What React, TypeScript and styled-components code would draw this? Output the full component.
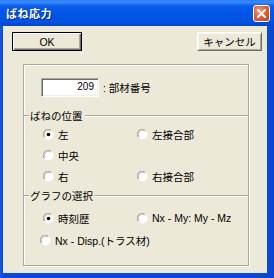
import React from 'react'
import styled, { createGlobalStyle } from 'styled-components'

const GlobalStyle = createGlobalStyle`
  html, body {
    margin: 0;
    padding: 0;
    background: #ffffff;
  }
  body {
    font-family: "Liberation Sans", "Noto Sans CJK JP", sans-serif;
    font-size: 10.5px;
    color: #000000;
  }
`

const Window = styled.div`
  width: 274px;
  height: 278px;
  box-sizing: border-box;
  display: flex;
  flex-direction: column;
  background: linear-gradient(to right, #1a5ae6 0px, #0a48d6 3px, #0a48d6 267px, #0b45cc 274px);
`

const TitleBar = styled.div`
  height: 26px;
  flex-shrink: 0;
  display: flex;
  align-items: center;
  justify-content: space-between;
  padding: 0 4px 0 6px;
  box-sizing: border-box;
  background: linear-gradient(
    to bottom,
    #2f7cf5 0px,
    #3b8bff 2px,
    #0a5ded 6px,
    #0055e6 14px,
    #0052e0 22px,
    #0048d2 26px
  );
`

const Title = styled.span`
  color: #ffffff;
  font-family: "Noto Sans CJK JP", sans-serif;
  font-weight: bold;
  font-size: 11px;
  letter-spacing: 0.5px;
  text-shadow: 1px 1px 0 #0a2a90;
`

const CloseButton = styled.div`
  width: 17px;
  height: 17px;
  box-sizing: border-box;
  border: 1px solid #ffffff;
  border-radius: 3px;
  background: radial-gradient(circle at 35% 30%, #f09a7a 0%, #e2603e 45%, #c8401f 100%);
  display: flex;
  align-items: center;
  justify-content: center;
  margin-top: 1px;
`

const Body = styled.div`
  flex: 1;
  margin: 0 7px 5px 3px;
  background: #ece9d8;
  padding: 6px 5px 7px 9px;
  display: flex;
  flex-direction: column;
`

const ButtonRow = styled.div`
  display: flex;
  justify-content: space-between;
  align-items: flex-start;
`

const Button = styled.div<{ $width: number; $default?: boolean }>`
  width: ${({ $width }) => $width}px;
  height: 19px;
  box-sizing: border-box;
  display: flex;
  align-items: center;
  justify-content: center;
  background: #ece9d8;
  font-size: 10.5px;
  border: 1px solid #000000;
  box-shadow: inset 1px 1px 0 #ffffff, inset -1px -1px 0 #716f64, inset -2px -2px 0 #aca899;
  ${({ $default }) =>
    !$default &&
    'border-color: #ffffff #716f64 #716f64 #ffffff; box-shadow: inset 1px 1px 0 #f5f4ee, inset -1px -1px 0 #aca899;'}
`

const OuterGroup = styled.div`
  flex: 1;
  margin: 13px 13px 0 11px;
  border: 1px solid #aca899;
  box-shadow: inset 1px 1px 0 #ffffff, 1px 1px 0 #ffffff;
  display: flex;
  flex-direction: column;
  padding-top: 13px;
`

const FieldRow = styled.div`
  display: flex;
  align-items: center;
  margin-left: 17px;
  height: 19px;
`

const NumberBox = styled.div`
  width: 58px;
  height: 19px;
  box-sizing: border-box;
  background: #ffffff;
  border-top: 1px solid #aca899;
  border-left: 1px solid #aca899;
  border-right: 1px solid #ffffff;
  border-bottom: 1px solid #ffffff;
  box-shadow: inset 1px 1px 0 #716f64, inset -1px -1px 0 #f1efe2;
  text-align: right;
  padding-right: 4px;
  line-height: 15px;
  font-size: 10px;
`

const FieldLabel = styled.span`
  margin-left: 4px;
`

const GroupHeader = styled.div<{ $top: number }>`
  display: flex;
  align-items: center;
  height: 12px;
  margin-top: ${({ $top }) => $top}px;

  &::before,
  &::after {
    content: '';
    height: 0;
    border-top: 1px solid #aca899;
    border-bottom: 1px solid #ffffff;
  }
  &::before {
    width: 5px;
  }
  &::after {
    flex: 1;
  }
`

const GroupLabel = styled.span`
  padding: 0 2px 0 1px;
  line-height: 12px;
`

const RadioGrid = styled.div<{ $top: number; $rows: string }>`
  display: grid;
  grid-template-columns: 94px 1fr;
  grid-template-rows: ${({ $rows }) => $rows};
  padding: ${({ $top }) => $top}px 0 0 19px;
`

const RadioItem = styled.label<{ $shift?: number }>`
  display: flex;
  align-items: center;
  gap: 4px;
  white-space: nowrap;
  margin-left: ${({ $shift }) => $shift ?? 0}px;
`

const RadioMark = ({ checked }: { checked?: boolean }) => (
  <svg width="11" height="11" viewBox="0 0 11 11">
    <circle cx="5.5" cy="5.5" r="5" fill="#ffffff" />
    <path d="M1.2 8.2 A5 5 0 0 1 8.2 1.2" fill="none" stroke="#9c9a8e" strokeWidth="1" />
    <path d="M2.2 7.8 A4 4 0 0 1 7.8 2.2" fill="none" stroke="#b5b3a8" strokeWidth="0.8" />
    {checked && <circle cx="5.5" cy="5.5" r="1.8" fill="#000000" />}
  </svg>
)

const Radio = ({
  label,
  checked,
  shift,
  style,
}: {
  label: string
  checked?: boolean
  shift?: number
  style?: React.CSSProperties
}) => (
  <RadioItem $shift={shift} style={style}>
    <RadioMark checked={checked} />
    <span>{label}</span>
  </RadioItem>
)

const CloseIcon = () => (
  <svg width="9" height="9" viewBox="0 0 9 9">
    <path d="M1 1 L8 8 M8 1 L1 8" stroke="#ffffff" strokeWidth="2" strokeLinecap="square" />
  </svg>
)

const App = () => {
  return (
    <>
      <GlobalStyle />
      <Window>
        <TitleBar>
          <Title>ばね応力</Title>
          <CloseButton>
            <CloseIcon />
          </CloseButton>
        </TitleBar>
        <Body>
          <ButtonRow>
            <Button $width={70} $default>
              OK
            </Button>
            <Button $width={65}>キャンセル</Button>
          </ButtonRow>
          <OuterGroup>
            <FieldRow>
              <NumberBox>209</NumberBox>
              <FieldLabel>: 部材番号</FieldLabel>
            </FieldRow>

            <GroupHeader $top={13}>
              <GroupLabel>ばねの位置</GroupLabel>
            </GroupHeader>
            <RadioGrid $top={2} $rows="21px 21px 21px">
              <Radio label="左" checked style={{ gridColumn: 1, gridRow: 1 }} />
              <Radio label="左接合部" style={{ gridColumn: 2, gridRow: 1 }} />
              <Radio label="中央" style={{ gridColumn: 1, gridRow: 2 }} />
              <Radio label="右" style={{ gridColumn: 1, gridRow: 3 }} />
              <Radio label="右接合部" style={{ gridColumn: 2, gridRow: 3 }} />
            </RadioGrid>

            <GroupHeader $top={3}>
              <GroupLabel>グラフの選択</GroupLabel>
            </GroupHeader>
            <RadioGrid $top={5} $rows="22px 23px">
              <Radio label="時刻歴" checked />
              <Radio label="Nx - My: My - Mz" />
              <Radio label="Nx - Disp.(トラス材)" shift={-3} style={{ gridColumn: '1 / 3' }} />
            </RadioGrid>
          </OuterGroup>
        </Body>
      </Window>
    </>
  )
}

export default App
